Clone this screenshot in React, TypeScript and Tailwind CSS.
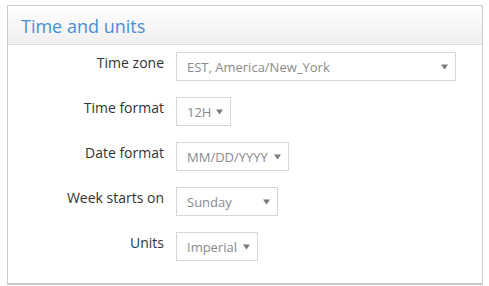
import React from "react";

function Arrow() {
  return (
    <svg width="7" height="6" viewBox="0 0 7 6" className="shrink-0">
      <path d="M0 0.5 L7 0.5 L3.5 5.5 Z" fill="#7a7a7a" />
    </svg>
  );
}

function Select({ value, width }: { value: string; width: string }) {
  return (
    <div
      className={`${width} h-[29px] border border-[#d6d6d6] bg-white flex items-center justify-between pl-[10px] pr-[7px] text-[13px] leading-[27px] text-[#8a8a8a]`}
    >
      <span className="pt-[1px]">{value}</span>
      <Arrow />
    </div>
  );
}

function Row({ label, children }: { label: string; children: React.ReactNode }) {
  return (
    <div className="flex items-start">
      <div className="w-[156px] text-right text-[14px] leading-[20px] text-[#333] pt-[1px]">{label}</div>
      <div className="ml-[12px]">{children}</div>
    </div>
  );
}

export default function App() {
  return (
    <div className="w-[489px] h-[286px] bg-white pt-[5px] pl-[7px]" style={{ fontFamily: '"Open Sans", sans-serif' }}>
      <div className="w-[476px] h-[280px] border border-[#cccccc] border-b-2 border-b-[#c8c8c8] bg-white">
        <div className="h-[39px] border-b border-[#dcdcdc] bg-gradient-to-b from-white to-[#efefef] flex items-center pl-[13px]">
          <span className="text-[18px] leading-[28px] font-medium text-[#4a8fd0] pt-[1px]">Time and units</span>
        </div>
        <div className="pt-[7px] flex flex-col gap-[16px]">
          <Row label="Time zone">
            <Select value="EST, America/New_York" width="w-[280px]" />
          </Row>
          <Row label="Time format">
            <Select value="12H" width="w-[55px]" />
          </Row>
          <Row label="Date format">
            <Select value="MM/DD/YYYY" width="w-[113px]" />
          </Row>
          <Row label="Week starts on">
            <Select value="Sunday" width="w-[102px]" />
          </Row>
          <Row label="Units">
            <Select value="Imperial" width="w-[82px]" />
          </Row>
        </div>
      </div>
    </div>
  );
}
